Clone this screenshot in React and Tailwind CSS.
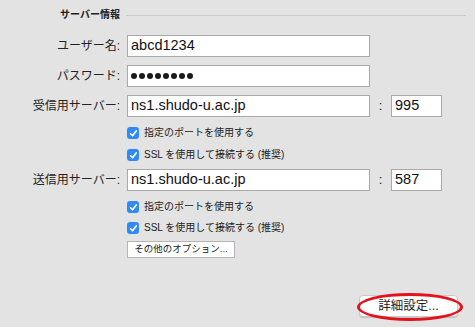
import React from "react";

const FONT = { fontFamily: "'Liberation Sans', 'Noto Sans CJK JP', sans-serif" };

function Check({ children }) {
  return (
    <div className="flex items-center h-[12px] pl-[127px]">
      <div className="w-[12px] h-[12px] rounded-[3px] bg-[#2f8af5] flex items-center justify-center">
        <svg width="9" height="9" viewBox="0 0 9 9">
          <path d="M1.6 4.8 L3.6 6.8 L7.4 1.8" fill="none" stroke="#fff" strokeWidth="1.6" strokeLinecap="round" strokeLinejoin="round" />
        </svg>
      </div>
      <span className="ml-[5px] text-[10px] leading-[12px] text-[#222]">{children}</span>
    </div>
  );
}

function Field({ label, children, port, className = "h-[22px]" }) {
  return (
    <div className={"flex items-center " + className}>
      <div className="w-[121px] text-right text-[12px] text-[#222] leading-none pr-[1px]">{label}</div>
      <div className="ml-[6px] w-[243px] h-full bg-white border border-[#a9a9a9] flex items-center pl-[3px] text-[14.5px] text-[#111]">
        {children}
      </div>
      {port && (
        <>
          <div className="w-[21px] text-center text-[13px] text-[#222]">:</div>
          <div className="w-[51px] h-full bg-white border border-[#a9a9a9] flex items-center pl-[3px] text-[14.5px] text-[#111]">
            {port}
          </div>
        </>
      )}
    </div>
  );
}

export default function App() {
  return (
    <div className="w-[475px] h-[327px] bg-[#e3e3e3] overflow-hidden flex flex-col" style={FONT}>
      <div className="mt-[9px] h-[12px] flex items-center">
        <span className="pl-[60px] text-[10px] font-bold leading-[12px] text-[#222]">サーバー情報</span>
        <div className="flex-1 ml-[6px] mr-[9px] h-px bg-[#cbcbcb]" />
      </div>
      <div className="mt-[14px]">
        <Field label="ユーザー名:">abcd1234</Field>
      </div>
      <div className="mt-[8px]">
        <Field label="パスワード:">
          <div className="flex gap-[2px]">
            {[0, 1, 2, 3, 4, 5, 6, 7].map((i) => (
              <div key={i} className="w-[6px] h-[6px] rounded-full bg-[#1a1a1a]" />
            ))}
          </div>
        </Field>
      </div>
      <div className="mt-[8px]">
        <Field label="受信用サーバー:" port="995">ns1.shudo-u.ac.jp</Field>
      </div>
      <div className="mt-[10px]">
        <Check>指定のポートを使用する</Check>
      </div>
      <div className="mt-[10px]">
        <Check>SSL を使用して接続する (推奨)</Check>
      </div>
      <div className="mt-[8px]">
        <Field label="送信用サーバー:" port="587" className="h-[22px]">ns1.shudo-u.ac.jp</Field>
      </div>
      <div className="mt-[10px]">
        <Check>指定のポートを使用する</Check>
      </div>
      <div className="mt-[9px]">
        <Check>SSL を使用して接続する (推奨)</Check>
      </div>
      <div className="mt-[7px] pl-[127px]">
        <div className="w-[108px] h-[17px] bg-white border border-[#b5b5b5] flex items-center justify-center text-[9.5px] text-[#222]">
          その他のオプション...
        </div>
      </div>
      <div className="mt-[37px] flex justify-end pr-[17px]">
        <div className="relative w-[99px] h-[22px] bg-white rounded-[4px] border border-[#c8c8c8] shadow-[0_1px_1px_rgba(0,0,0,0.15)] flex items-center justify-center text-[12.5px] text-[#222]">
          詳細設定...
          <div className="absolute left-[-3px] top-[-3px] w-[106px] h-[28px] rounded-[50%] border-[3px] border-[#e3121b]" />
        </div>
      </div>
    </div>
  );
}
